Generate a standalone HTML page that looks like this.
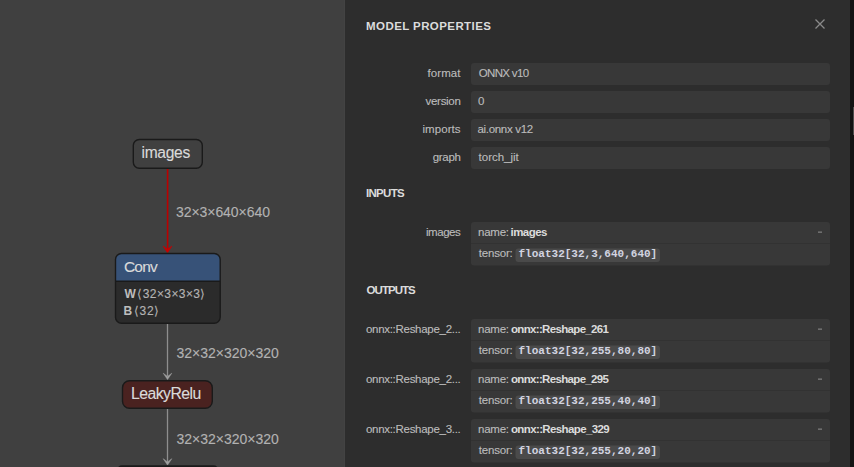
<!DOCTYPE html>
<html><head><meta charset="utf-8">
<style>html,body{margin:0;padding:0;background:#404040;}body{width:854px;height:467px;overflow:hidden;font-family:"Liberation Sans",sans-serif;}svg{display:block;}</style>
</head><body>
<svg width="854" height="467" viewBox="0 0 854 467">
<rect width="854" height="467" fill="#404040"/>
<line x1="167.6" y1="168" x2="167.6" y2="249" stroke="#bb0000" stroke-width="1.6"/>
<path d="M163 246 L167.5 252.8 L172 246 L167.5 249.2 Z" fill="#c80000" stroke="#c80000" stroke-width="0.6" stroke-linejoin="round"/>
<line x1="167.5" y1="324" x2="167.5" y2="376" stroke="#8e8e8e" stroke-width="1.3"/>
<path d="M163.2 373.2 L167.5 379.6 L171.8 373.2 L167.5 376.4 Z" fill="#a0a0a0" stroke="#a0a0a0" stroke-width="0.5" stroke-linejoin="round"/>
<line x1="167.5" y1="409" x2="167.5" y2="462" stroke="#8e8e8e" stroke-width="1.3"/>
<path d="M163.2 458.7 L167.5 465.1 L171.8 458.7 L167.5 461.9 Z" fill="#a0a0a0" stroke="#a0a0a0" stroke-width="0.5" stroke-linejoin="round"/>
<rect x="133.3" y="139.5" width="69" height="28.8" rx="6" fill="#404040" stroke="#1a1a1a" stroke-width="1.4"/>
<path d="M115.5 281.3 V259.5 a6 6 0 0 1 6 -6 H214.2 a6 6 0 0 1 6 6 V281.3 Z" fill="#375278"/>
<path d="M115.5 281.3 H220.2 V317.2 a6 6 0 0 1 -6 6 H121.5 a6 6 0 0 1 -6 -6 Z" fill="#2b2b2b"/>
<line x1="115.5" y1="281.2" x2="220.2" y2="281.2" stroke="#1a1a1a" stroke-width="1.5"/>
<rect x="115.5" y="253.5" width="104.7" height="69.7" rx="6" fill="none" stroke="#1a1a1a" stroke-width="1.4"/>
<rect x="122.5" y="380.7" width="89.8" height="27.6" rx="7" fill="#4a2220" stroke="#1a1a1a" stroke-width="1.4"/>
<rect x="117" y="465.3" width="101.5" height="28" rx="5" fill="#1a1a1a"/>
<rect x="344" y="0" width="1" height="467" fill="#434343"/>
<rect x="345" y="0" width="505" height="467" fill="#2d2d2d"/>
<rect x="850" y="0" width="4" height="467" fill="#141414"/>
<rect x="853" y="107" width="1" height="28" fill="#4e4e4e"/>
<path d="M815.5 19.5 L824.5 28.5 M824.5 19.5 L815.5 28.5" stroke="#8a8a8a" stroke-width="1.3"/>
<rect x="471" y="63" width="359" height="22" rx="3" fill="#383838"/>
<rect x="471" y="91" width="359" height="22" rx="3" fill="#383838"/>
<rect x="471" y="119" width="359" height="22" rx="3" fill="#383838"/>
<rect x="471" y="147" width="359" height="22" rx="3" fill="#383838"/>
<rect x="471" y="222" width="359" height="43.5" rx="3" fill="#383838"/>
<rect x="471" y="243" width="359" height="1" fill="#323232"/>
<rect x="818" y="231.5" width="4" height="1.3" fill="#7c7c7c"/>
<rect x="515.5" y="248.5" width="144.5" height="13.5" rx="3" fill="#4a4a4a"/>
<rect x="471" y="319" width="359" height="43.5" rx="3" fill="#383838"/>
<rect x="471" y="340" width="359" height="1" fill="#323232"/>
<rect x="818" y="328.5" width="4" height="1.3" fill="#7c7c7c"/>
<rect x="515.5" y="345.5" width="144.5" height="13.5" rx="3" fill="#4a4a4a"/>
<rect x="471" y="369" width="359" height="43.5" rx="3" fill="#383838"/>
<rect x="471" y="390" width="359" height="1" fill="#323232"/>
<rect x="818" y="378.5" width="4" height="1.3" fill="#7c7c7c"/>
<rect x="515.5" y="395.5" width="144.5" height="13.5" rx="3" fill="#4a4a4a"/>
<rect x="471" y="419" width="359" height="43.5" rx="3" fill="#383838"/>
<rect x="471" y="440" width="359" height="1" fill="#323232"/>
<rect x="818" y="428.5" width="4" height="1.3" fill="#7c7c7c"/>
<rect x="515.5" y="445.5" width="144.5" height="13.5" rx="3" fill="#4a4a4a"/>
<text x="366.04" y="29.7" font-size="11.5" font-weight="bold" fill="#dcdcdc" style='font-family:"Liberation Sans", sans-serif' textLength="124.88" lengthAdjust="spacing">MODEL PROPERTIES</text>
<text x="427.58" y="77" font-size="11.5" font-weight="normal" fill="#bcbcbc" style='font-family:"Liberation Sans", sans-serif' stroke="#bcbcbc" stroke-width="0.12" textLength="32.94" lengthAdjust="spacing">format</text>
<text x="478.70" y="77" font-size="11.5" font-weight="normal" fill="#bcbcbc" style='font-family:"Liberation Sans", sans-serif' stroke="#bcbcbc" stroke-width="0.12" textLength="50.36" lengthAdjust="spacing">ONNX v10</text>
<text x="425.58" y="105" font-size="11.5" font-weight="normal" fill="#bcbcbc" style='font-family:"Liberation Sans", sans-serif' stroke="#bcbcbc" stroke-width="0.12" textLength="35.24" lengthAdjust="spacing">version</text>
<text x="477.88" y="105" font-size="11.5" font-weight="normal" fill="#bcbcbc" style='font-family:"Liberation Sans", sans-serif' stroke="#bcbcbc" stroke-width="0.12">0</text>
<text x="422.46" y="133" font-size="11.5" font-weight="normal" fill="#bcbcbc" style='font-family:"Liberation Sans", sans-serif' stroke="#bcbcbc" stroke-width="0.12" textLength="38.12" lengthAdjust="spacing">imports</text>
<text x="477.38" y="133" font-size="11.5" font-weight="normal" fill="#bcbcbc" style='font-family:"Liberation Sans", sans-serif' stroke="#bcbcbc" stroke-width="0.12" textLength="55.82" lengthAdjust="spacing">ai.onnx v12</text>
<text x="432.70" y="161" font-size="11.5" font-weight="normal" fill="#bcbcbc" style='font-family:"Liberation Sans", sans-serif' stroke="#bcbcbc" stroke-width="0.12" textLength="28.18" lengthAdjust="spacing">graph</text>
<text x="478.58" y="161" font-size="11.5" font-weight="normal" fill="#bcbcbc" style='font-family:"Liberation Sans", sans-serif' stroke="#bcbcbc" stroke-width="0.12" textLength="40.24" lengthAdjust="spacing">torch_jit</text>
<text x="365.88" y="197" font-size="11.5" font-weight="bold" fill="#dcdcdc" style='font-family:"Liberation Sans", sans-serif' textLength="38.82" lengthAdjust="spacing">INPUTS</text>
<text x="366.58" y="294.3" font-size="11.5" font-weight="bold" fill="#dcdcdc" style='font-family:"Liberation Sans", sans-serif' textLength="49.12" lengthAdjust="spacing">OUTPUTS</text>
<text x="425.92" y="236" font-size="11.5" font-weight="normal" fill="#bcbcbc" style='font-family:"Liberation Sans", sans-serif' stroke="#bcbcbc" stroke-width="0.12" textLength="34.88" lengthAdjust="spacing">images</text>
<text x="477.96" y="236" font-size="11.5" font-weight="normal" fill="#bcbcbc" style='font-family:"Liberation Sans", sans-serif' stroke="#bcbcbc" stroke-width="0.12" textLength="31.06" lengthAdjust="spacing">name:</text>
<text x="510.50" y="236" font-size="11.5" font-weight="bold" fill="#dcdcdc" style='font-family:"Liberation Sans", sans-serif' textLength="37.00" lengthAdjust="spacing">images</text>
<text x="478.66" y="257" font-size="11.5" font-weight="normal" fill="#bcbcbc" style='font-family:"Liberation Sans", sans-serif' stroke="#bcbcbc" stroke-width="0.12" textLength="34.12" lengthAdjust="spacing">tensor:</text>
<text x="518.50" y="257" font-size="11" font-weight="bold" fill="#d2d4e0" style='font-family:"Liberation Mono", monospace' textLength="138.70" lengthAdjust="spacing">float32[32,3,640,640]</text>
<text x="365.92" y="333" font-size="11.5" font-weight="normal" fill="#bcbcbc" style='font-family:"Liberation Sans", sans-serif' stroke="#bcbcbc" stroke-width="0.12" textLength="94.88" lengthAdjust="spacing">onnx::Reshape_2...</text>
<text x="477.96" y="333" font-size="11.5" font-weight="normal" fill="#bcbcbc" style='font-family:"Liberation Sans", sans-serif' stroke="#bcbcbc" stroke-width="0.12" textLength="31.06" lengthAdjust="spacing">name:</text>
<text x="510.96" y="333" font-size="11.5" font-weight="bold" fill="#dcdcdc" style='font-family:"Liberation Sans", sans-serif' textLength="98.00" lengthAdjust="spacing">onnx::Reshape_261</text>
<text x="478.66" y="354" font-size="11.5" font-weight="normal" fill="#bcbcbc" style='font-family:"Liberation Sans", sans-serif' stroke="#bcbcbc" stroke-width="0.12" textLength="34.12" lengthAdjust="spacing">tensor:</text>
<text x="518.50" y="354" font-size="11" font-weight="bold" fill="#d2d4e0" style='font-family:"Liberation Mono", monospace' textLength="138.70" lengthAdjust="spacing">float32[32,255,80,80]</text>
<text x="365.92" y="383" font-size="11.5" font-weight="normal" fill="#bcbcbc" style='font-family:"Liberation Sans", sans-serif' stroke="#bcbcbc" stroke-width="0.12" textLength="94.88" lengthAdjust="spacing">onnx::Reshape_2...</text>
<text x="477.96" y="383" font-size="11.5" font-weight="normal" fill="#bcbcbc" style='font-family:"Liberation Sans", sans-serif' stroke="#bcbcbc" stroke-width="0.12" textLength="31.06" lengthAdjust="spacing">name:</text>
<text x="510.96" y="383" font-size="11.5" font-weight="bold" fill="#dcdcdc" style='font-family:"Liberation Sans", sans-serif' textLength="98.00" lengthAdjust="spacing">onnx::Reshape_295</text>
<text x="478.66" y="404" font-size="11.5" font-weight="normal" fill="#bcbcbc" style='font-family:"Liberation Sans", sans-serif' stroke="#bcbcbc" stroke-width="0.12" textLength="34.12" lengthAdjust="spacing">tensor:</text>
<text x="518.50" y="404" font-size="11" font-weight="bold" fill="#d2d4e0" style='font-family:"Liberation Mono", monospace' textLength="138.70" lengthAdjust="spacing">float32[32,255,40,40]</text>
<text x="365.92" y="433" font-size="11.5" font-weight="normal" fill="#bcbcbc" style='font-family:"Liberation Sans", sans-serif' stroke="#bcbcbc" stroke-width="0.12" textLength="94.88" lengthAdjust="spacing">onnx::Reshape_3...</text>
<text x="477.96" y="433" font-size="11.5" font-weight="normal" fill="#bcbcbc" style='font-family:"Liberation Sans", sans-serif' stroke="#bcbcbc" stroke-width="0.12" textLength="31.06" lengthAdjust="spacing">name:</text>
<text x="510.96" y="433" font-size="11.5" font-weight="bold" fill="#dcdcdc" style='font-family:"Liberation Sans", sans-serif' textLength="98.70" lengthAdjust="spacing">onnx::Reshape_329</text>
<text x="478.66" y="454" font-size="11.5" font-weight="normal" fill="#bcbcbc" style='font-family:"Liberation Sans", sans-serif' stroke="#bcbcbc" stroke-width="0.12" textLength="34.12" lengthAdjust="spacing">tensor:</text>
<text x="518.50" y="454" font-size="11" font-weight="bold" fill="#d2d4e0" style='font-family:"Liberation Mono", monospace' textLength="138.70" lengthAdjust="spacing">float32[32,255,20,20]</text>
<text x="141.46" y="158" font-size="15.6" font-weight="normal" fill="#dadada" style='font-family:"Liberation Sans", sans-serif' stroke="#dadada" stroke-width="0.12" textLength="48.82" lengthAdjust="spacing">images</text>
<text x="123.88" y="272.3" font-size="15.5" font-weight="normal" fill="#dadada" style='font-family:"Liberation Sans", sans-serif' stroke="#dadada" stroke-width="0.12" textLength="33.88" lengthAdjust="spacing">Conv</text>
<text x="124.46" y="297.6" font-size="12" font-weight="bold" fill="#bdbdbd" style='font-family:"Liberation Sans", sans-serif' textLength="-16.04" lengthAdjust="spacing">W</text>
<text x="137.30" y="297.6" font-size="12" font-weight="normal" fill="#b4b4b4" style='font-family:"Liberation Sans", sans-serif' stroke="#b4b4b4" stroke-width="0.12" textLength="68.16" lengthAdjust="spacing">⟨32×3×3×3⟩</text>
<text x="123.46" y="314.8" font-size="12" font-weight="bold" fill="#bdbdbd" style='font-family:"Liberation Sans", sans-serif'>B</text>
<text x="133.54" y="314.8" font-size="12" font-weight="normal" fill="#b4b4b4" style='font-family:"Liberation Sans", sans-serif' stroke="#b4b4b4" stroke-width="0.12" textLength="25.92" lengthAdjust="spacing">⟨32⟩</text>
<text x="131.12" y="399" font-size="15.8" font-weight="normal" fill="#dadada" style='font-family:"Liberation Sans", sans-serif' stroke="#dadada" stroke-width="0.12" textLength="70.06" lengthAdjust="spacing">LeakyRelu</text>
<text x="175.96" y="217" font-size="14" font-weight="normal" fill="#b2b2b2" style='font-family:"Liberation Sans", sans-serif' stroke="#b2b2b2" stroke-width="0.12" textLength="94.00" lengthAdjust="spacing">32×3×640×640</text>
<text x="176.38" y="358" font-size="14" font-weight="normal" fill="#b2b2b2" style='font-family:"Liberation Sans", sans-serif' stroke="#b2b2b2" stroke-width="0.12" textLength="102.52" lengthAdjust="spacing">32×32×320×320</text>
<text x="176.38" y="444" font-size="14" font-weight="normal" fill="#b2b2b2" style='font-family:"Liberation Sans", sans-serif' stroke="#b2b2b2" stroke-width="0.12" textLength="102.52" lengthAdjust="spacing">32×32×320×320</text>
</svg>
</body></html>
